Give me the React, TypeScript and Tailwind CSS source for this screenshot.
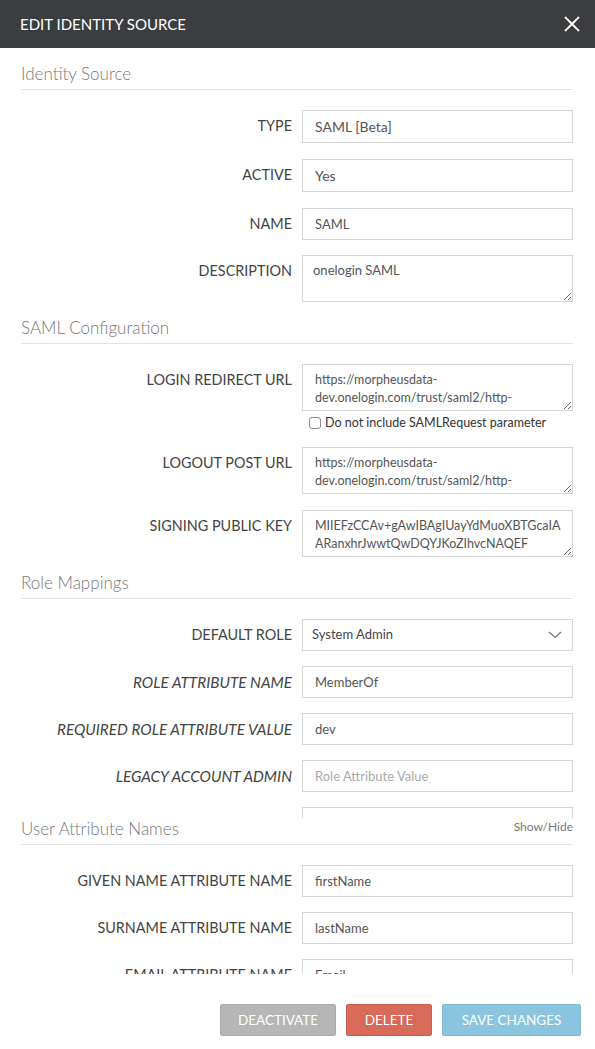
import { ReactNode } from "react";

const font = { fontFamily: "Lato, 'Open Sans', Arial, sans-serif" };

function SectionTitle({ title, extra }: { title: string; extra?: ReactNode }) {
  return (
    <div className="flex items-end justify-between border-b border-[#e3e3e3] pb-[4px]">
      <h3 className="text-[17px] leading-[22px] font-light text-[#777]">{title}</h3>
      {extra}
    </div>
  );
}

function Row({
  label,
  italic,
  children,
  className = "mb-[15px]",
}: {
  label: string;
  italic?: boolean;
  children: ReactNode;
  className?: string;
}) {
  return (
    <div className={`grid grid-cols-2 gap-x-[10px] ${className}`}>
      <label
        className={`pt-[6px] text-right leading-5 text-[#444] ${italic ? "text-[15.3px] italic" : "text-[14.4px]"}`}
      >
        {label}
      </label>
      <div>{children}</div>
    </div>
  );
}

function TextInput({
  value,
  placeholder,
  h = "h-[32px]",
  size = "text-[13px]",
}: {
  value?: string;
  placeholder?: string;
  h?: string;
  size?: string;
}) {
  return (
    <input
      readOnly
      defaultValue={value}
      placeholder={placeholder}
      className={`block w-full ${h} border border-[#d6d6d6] bg-white px-[12px] ${size} text-[#555] placeholder:text-[#aaa] outline-none`}
    />
  );
}

function Area({ value }: { value: string }) {
  return (
    <textarea
      readOnly
      defaultValue={value}
      className="block h-[47px] w-full overflow-hidden whitespace-pre border border-[#d6d6d6] bg-white px-[12px] pt-[6px] text-[12.5px] leading-[18px] text-[#555] outline-none"
    />
  );
}

export default function App() {
  return (
    <div className="flex h-[1049px] flex-col bg-white" style={font}>
      {/* Header */}
      <div className="flex h-[48px] shrink-0 items-center justify-between bg-[#3c3d3f] pl-[20px] pr-[14px]">
        <h2 className="text-[15px] font-normal text-white">EDIT IDENTITY SOURCE</h2>
        <svg width="18" height="18" viewBox="0 0 18 18" className="text-white">
          <path d="M2 2 L16 16 M16 2 L2 16" stroke="currentColor" strokeWidth="1.8" />
        </svg>
      </div>

      {/* Body */}
      <div className="flex-1 pl-[21px] pr-[22px] pt-[15px]">
        <SectionTitle title="Identity Source" />
        <div className="pt-[20px]">
          <Row label="TYPE" className="mb-[16px]">
            <TextInput value="SAML [Beta]" h="h-[33px]" size="text-[14px]" />
          </Row>
          <Row label="ACTIVE" className="mb-[16px]">
            <TextInput value="Yes" h="h-[33px]" size="text-[14px]" />
          </Row>
          <Row label="NAME">
            <TextInput value="SAML" />
          </Row>
          <Row label="DESCRIPTION" className="mb-[15px]">
            <textarea
              readOnly
              defaultValue="onelogin SAML"
              className="block h-[47px] w-full overflow-hidden border border-[#d6d6d6] bg-white px-[10px] pt-[5px] text-[13px] leading-[18px] text-[#555] outline-none"
            />
          </Row>
        </div>

        <SectionTitle title="SAML Configuration" />
        <div className="pt-[20px]">
          <Row label="LOGIN REDIRECT URL" className="mb-[15px]">
            <Area value={"https://morpheusdata-\ndev.onelogin.com/trust/saml2/http-\nredirect/sso/612345"} />
            <label className="mt-[3px] flex h-[18px] items-center gap-[4px] pl-[7px] text-[12.5px] text-[#333]">
              <span className="inline-block h-[12px] w-[12px] rounded-[3px] border border-[#8a8a8a] bg-white" />
              Do not include SAMLRequest parameter
            </label>
          </Row>
          <Row label="LOGOUT POST URL" className="mb-[16px]">
            <Area value={"https://morpheusdata-\ndev.onelogin.com/trust/saml2/http-\npost/slo/612345"} />
          </Row>
          <Row label="SIGNING PUBLIC KEY" className="mb-[15px]">
            <Area value={"MIIEFzCCAv+gAwIBAgIUayYdMuoXBTGcaIA\nARanxhrJwwtQwDQYJKoZIhvcNAQEF\nBQAwWDELMAkGA1UEBhMCVVMxETAPBgNV"} />
          </Row>
        </div>

        <SectionTitle title="Role Mappings" />
        <div className="mt-[20px] h-[199px] overflow-hidden">
          <Row label="DEFAULT ROLE">
            <div className="flex h-[32px] items-center justify-between border border-[#d6d6d6] bg-white pl-[9px] pr-[10px] text-[13px] text-[#444]">
              <span>System Admin</span>
              <svg width="14" height="8" viewBox="0 0 14 8">
                <path d="M1 1 L7 6.5 L13 1" fill="none" stroke="#777" strokeWidth="1.2" />
              </svg>
            </div>
          </Row>
          <Row label="ROLE ATTRIBUTE NAME" italic>
            <TextInput value="MemberOf" />
          </Row>
          <Row label="REQUIRED ROLE ATTRIBUTE VALUE" italic>
            <TextInput value="dev" />
          </Row>
          <Row label="LEGACY ACCOUNT ADMIN" italic>
            <TextInput placeholder="Role Attribute Value" />
          </Row>
          <Row label="LEGACY ACCOUNT USER" italic>
            <TextInput placeholder="Role Attribute Value" />
          </Row>
        </div>

        <SectionTitle
          title="User Attribute Names"
          extra={<span className="pb-[5px] text-[12px] leading-4 text-[#777]">Show/Hide</span>}
        />
        <div className="mt-[20px] h-[109px] overflow-hidden">
          <Row label="GIVEN NAME ATTRIBUTE NAME">
            <TextInput value="firstName" />
          </Row>
          <Row label="SURNAME ATTRIBUTE NAME">
            <TextInput value="lastName" />
          </Row>
          <Row label="EMAIL ATTRIBUTE NAME">
            <TextInput value="Email" />
          </Row>
        </div>
      </div>

      {/* Footer */}
      <div className="flex shrink-0 justify-end gap-[10px] pb-[13px] pr-[14px]">
        <button className="h-[32px] w-[116px] rounded-[2px] border border-[#a9aaa9] bg-[#b5b6b5] text-[13.5px] text-white">
          DEACTIVATE
        </button>
        <button className="h-[32px] w-[86px] rounded-[2px] border border-[#c95e4f] bg-[#d86a5a] text-[13.5px] text-white">
          DELETE
        </button>
        <button className="h-[32px] w-[139px] rounded-[2px] border border-[#7db8d3] bg-[#8ac4df] text-[13.5px] text-white">
          SAVE CHANGES
        </button>
      </div>
    </div>
  );
}
